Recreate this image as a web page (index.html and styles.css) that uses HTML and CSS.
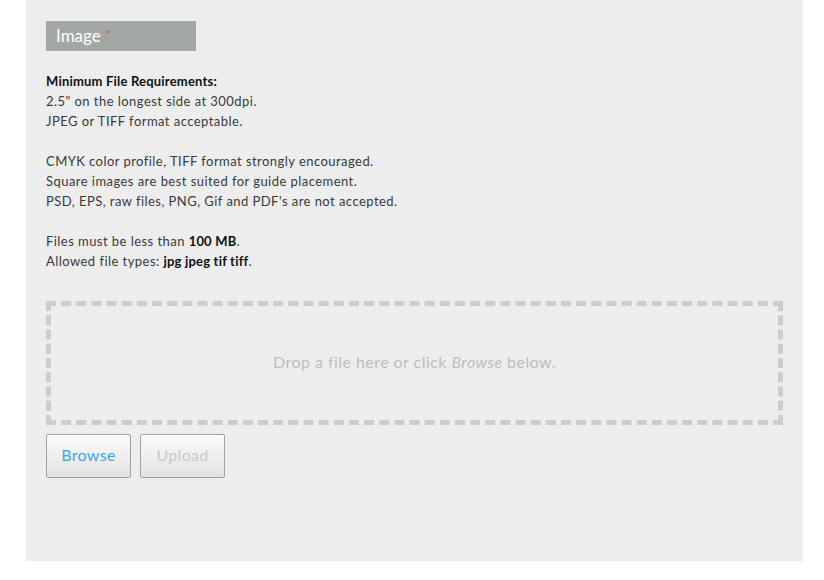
FILE: index.html
```html
<!DOCTYPE html>
<html>
<head>
<meta charset="utf-8">
<link rel="stylesheet" href="styles.css">
</head>
<body>
<div class="panel">
  <div class="label">Image <span class="req">*</span></div>
  <div class="desc">
    <p><strong>Minimum File Requirements:</strong><br>
    2.5" on the longest side at 300dpi.<br>
    JPEG or TIFF format acceptable.</p>
    <p>CMYK color profile, TIFF format strongly encouraged.<br>
    Square images are best suited for guide placement.<br>
    PSD, EPS, raw files, PNG, Gif and PDF's are not accepted.</p>
    <p>Files must be less than <strong>100 MB</strong>.<br>
    Allowed file types: <strong>jpg jpeg tif tiff</strong>.</p>
  </div>
  <div class="drop"><span>Drop a file here or click <em>Browse</em> below.</span></div>
  <div class="buttons">
    <button class="btn browse">Browse</button>
    <button class="btn upload" disabled>Upload</button>
  </div>
</div>
</body>
</html>
```
FILE: styles.css
```css
html, body { margin: 0; padding: 0; background: #fff; }
body { font-family: Lato, "Open Sans", sans-serif; }
.panel {
  margin-left: 26px;
  width: 777px;
  height: 561px;
  background: #ededed;
  padding: 21px 20px 0;
  box-sizing: border-box;
}
.label {
  width: 150px;
  height: 30px;
  background: #a3a8a5;
  color: #fff;
  font-size: 17px;
  line-height: 30px;
  padding-left: 10px;
  box-sizing: border-box;
}
.req { color: #d9534f; font-size: 12px; position: relative; top: -3px; }
.desc { margin-top: 20px; font-size: 13px; line-height: 20px; color: #3a3a3a; letter-spacing: 0.45px; }
.desc p { margin: 0 0 20px; }
.desc p:last-child { margin-bottom: 0; }
.desc strong { color: #111; font-weight: 700; letter-spacing: 0.2px; }
.drop {
  margin-top: 30px;
  height: 124px;
  border: 5px dashed #cccccc;
  box-sizing: border-box;
  display: flex;
  align-items: center;
  justify-content: center;
  color: #bdbdbd;
  font-size: 16px;
  letter-spacing: 0.45px;
  padding-bottom: 3px;
}
.buttons { display: flex; gap: 9px; margin-top: 9px; }
.btn {
  width: 85px;
  height: 44px;
  border: 1px solid #a0a0a0;
  border-radius: 2px;
  background: linear-gradient(#fbfbfb, #e2e2e2);
  font-family: inherit;
  font-size: 16px;
  letter-spacing: 0.3px;
  padding: 0 0 3px;
}
.browse { color: #3aa8e4; }
.upload { color: #c8c8c8; }
```
